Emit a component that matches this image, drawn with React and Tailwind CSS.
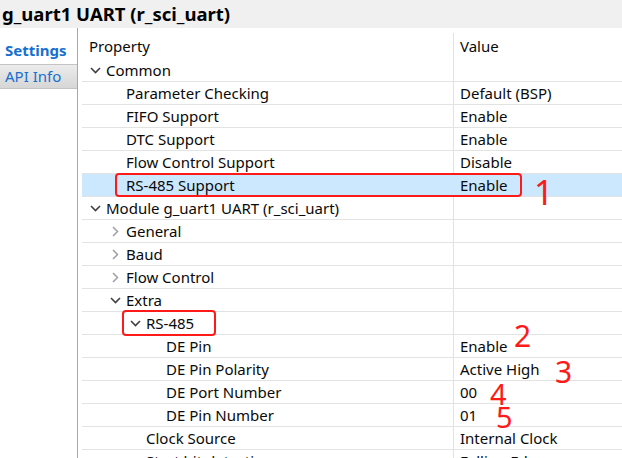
import React from "react";

const rows = [
  { level: 0, chevron: "down", label: "Common", value: "" },
  { level: 1, label: "Parameter Checking", value: "Default (BSP)" },
  { level: 1, label: "FIFO Support", value: "Enable" },
  { level: 1, label: "DTC Support", value: "Enable" },
  { level: 1, label: "Flow Control Support", value: "Disable" },
  { level: 1, label: "RS-485 Support", value: "Enable", selected: true },
  { level: 0, chevron: "down", label: "Module g_uart1 UART (r_sci_uart)", value: "" },
  { level: 1, chevron: "right", label: "General", value: "" },
  { level: 1, chevron: "right", label: "Baud", value: "" },
  { level: 1, chevron: "right", label: "Flow Control", value: "" },
  { level: 1, chevron: "down", label: "Extra", value: "" },
  { level: 2, chevron: "down", label: "RS-485", value: "", boxed: true },
  { level: 3, label: "DE Pin", value: "Enable" },
  { level: 3, label: "DE Pin Polarity", value: "Active High" },
  { level: 3, label: "DE Port Number", value: "00" },
  { level: 3, label: "DE Pin Number", value: "01" },
  { level: 2, label: "Clock Source", value: "Internal Clock" },
  { level: 2, label: "Start bit detection", value: "Falling Edge" },
];

const padClass = ["pl-[3px]", "pl-[23px]", "pl-[43px]", "pl-[63px]"];

function Chevron({ dir }) {
  if (dir === "down") {
    return (
      <svg width="11" height="7" viewBox="0 0 11 7">
        <path d="M1 1 L5.5 5.5 L10 1" fill="none" stroke="#404040" strokeWidth="1.6" />
      </svg>
    );
  }
  return (
    <svg width="7" height="11" viewBox="0 0 7 11">
      <path d="M1 1 L5.5 5.5 L1 10" fill="none" stroke="#a0a0a0" strokeWidth="1.5" />
    </svg>
  );
}

// annotation numbers placed next to the rows
function Mark({ n, className }) {
  return (
    <span
      className={`absolute text-[#ff1a1a] font-['Noto_Sans',sans-serif] font-normal leading-none ${className}`}
    >
      {n}
    </span>
  );
}

export default function App() {
  return (
    <div className="w-[622px] h-[458px] overflow-hidden bg-white font-['Noto_Sans',sans-serif] text-[15px] text-[#0a0a0a]">
      {/* title */}
      <div className="h-[28px] bg-[#f0f0f0] flex items-center pl-[2px]">
        <span className="text-[18.5px] font-bold text-black leading-none">g_uart1 UART (r_sci_uart)</span>
      </div>

      <div className="flex h-[430px]">
        {/* left tabs */}
        <div className="w-[78px] shrink-0 border-r border-[#a8a8a8] pt-[8px]">
          <div className="h-[28px] bg-white flex items-center pl-[5px] text-[#1670d0] font-bold">Settings</div>
          <div className="h-[25px] flex items-center pl-[5px] text-[#1670d0] bg-gradient-to-b from-[#ececec] to-[#d6d6d6] border-y border-[#c4c4c4]">
            API Info
          </div>
        </div>

        {/* property table */}
        <div className="flex-1 pl-[4px]">
          <div className="flex h-[31px]">
            <div className="w-[371px] pl-[7px] pt-[11px] leading-none">Property</div>
            <div className="flex-1 border-l border-[#e2e2e2] mt-[5px] pl-[6px] pt-[6px] leading-none">Value</div>
          </div>

          {rows.map((r, i) => (
            <div
              key={i}
              className={`relative flex h-[23px] border-b border-[#e3e3e3] ${r.selected ? "bg-[#cce8ff]" : ""}`}
            >
              <div className={`w-[371px] flex items-center ${padClass[r.level]}`}>
                <span className="w-[21px] flex items-center justify-center">
                  {r.chevron && <Chevron dir={r.chevron} />}
                </span>
                <span className="whitespace-nowrap">{r.label}</span>
              </div>
              <div className="flex-1 flex items-center border-l border-[#e2e2e2] pl-[6px] whitespace-nowrap">
                {r.value}
              </div>

              {r.selected && (
                <>
                  <div className="absolute left-[33px] right-[100px] top-[-1px] bottom-[-1px] border-[2.5px] border-[#ff1a1a] rounded-[4px]" />
                  <Mark n="1" className="left-[452px] top-[1px] text-[34px]" />
                </>
              )}
              {r.boxed && (
                <div className="absolute left-[40px] w-[94px] top-[-2px] bottom-[-2px] border-[2.5px] border-[#ff1a1a] rounded-[4px]" />
              )}
              {r.label === "DE Pin" && <Mark n="2" className="left-[432px] top-[-14px] text-[30px]" />}
              {r.label === "DE Pin Polarity" && <Mark n="3" className="left-[473px] top-[-1px] text-[30px]" />}
              {r.label === "DE Port Number" && <Mark n="4" className="left-[408px] top-[-2px] text-[29px]" />}
              {r.label === "DE Pin Number" && <Mark n="5" className="left-[414px] top-[-2px] text-[29px]" />}
            </div>
          ))}
        </div>
      </div>
    </div>
  );
}
